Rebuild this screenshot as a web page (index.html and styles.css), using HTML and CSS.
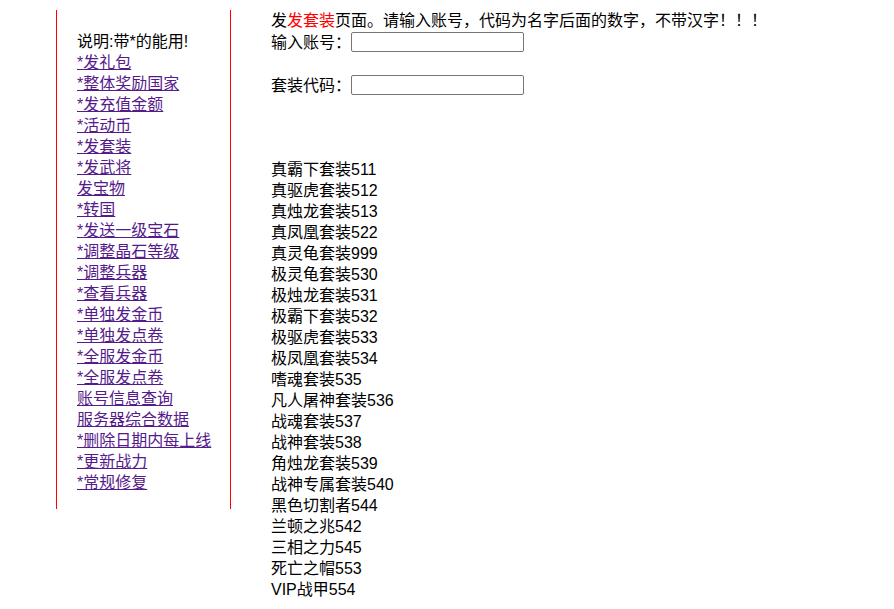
FILE: index.html
```html
<!DOCTYPE html>
<html>
  <head>
    <meta charset="utf-8">
    <title>GM工具</title>
    <link rel="stylesheet" href="styles.css">
  </head>
  <body>
    <div class="page">
      <div class="menu">
        <br />
        说明:带*的能用!<br />
        <a href="#">*发礼包</a><br />
        <a href="#">*整体奖励国家</a><br />
        <a href="#">*发充值金额</a><br />
        <a href="#">*活动币</a><br />
        <a href="#">*发套装</a><br />
        <a href="#">*发武将</a><br />
        <a href="#">发宝物</a><br />
        <a href="#">*转国</a><br />
        <a href="#">*发送一级宝石</a><br />
        <a href="#">*调整晶石等级</a><br />
        <a href="#">*调整兵器</a><br />
        <a href="#">*查看兵器</a><br />
        <a href="#">*单独发金币</a><br />
        <a href="#">*单独发点卷</a><br />
        <a href="#">*全服发金币</a><br />
        <a href="#">*全服发点卷</a><br />
        <a href="#">账号信息查询</a><br />
        <a href="#">服务器综合数据</a><br />
        <a href="#">*删除日期内每上线</a><br />
        <a href="#">*更新战力</a><br />
        <a href="#">*常规修复</a>
      </div>

      <div class="main">
        <div>发<span class="red">发套装</span>页面。请输入账号，代码为名字后面的数字，不带汉字！！！</div>
        <form>
          <div class="row">输入账号：<input type="text" name="account"></div>
          <br />
          <div class="row">套装代码：<input type="text" name="code"></div>
          <br />
          <br />
          <br />
        </form>
        <div class="list">
          真霸下套装511<br />
          真驱虎套装512<br />
          真烛龙套装513<br />
          真凤凰套装522<br />
          真灵龟套装999<br />
          极灵龟套装530<br />
          极烛龙套装531<br />
          极霸下套装532<br />
          极驱虎套装533<br />
          极凤凰套装534<br />
          嗜魂套装535<br />
          凡人屠神套装536<br />
          战魂套装537<br />
          战神套装538<br />
          角烛龙套装539<br />
          战神专属套装540<br />
          黑色切割者544<br />
          兰顿之兆542<br />
          三相之力545<br />
          死亡之帽553<br />
          VIP战甲554
        </div>
      </div>
    </div>
  </body>
</html>
```

FILE: styles.css
```css
body {
  margin: 8px;
  font-family: "Liberation Sans", "Noto Sans CJK SC", sans-serif;
  font-size: 16px;
  line-height: 21px;
  color: #000;
}

.page {
  display: flex;
  align-items: flex-start;
  padding-top: 2px;
}

.menu {
  margin-left: 48px;
  width: 153px;
  padding: 0 0 16px 20px;
  border-left: 1px solid red;
  border-right: 1px solid red;
}

.menu a {
  color: #551a8b;
}

.main {
  margin-left: 40px;
}

.red {
  color: red;
}

form {
  margin: 0;
}

.row {
  height: 22px;
  display: flex;
  align-items: center;
}

.row input {
  width: 173px;
  height: 20px;
  box-sizing: border-box;
  margin: 0;
  padding: 1px 2px;
  border: 1px solid #767676;
  border-radius: 2px;
  font-size: 13px;
}
```
